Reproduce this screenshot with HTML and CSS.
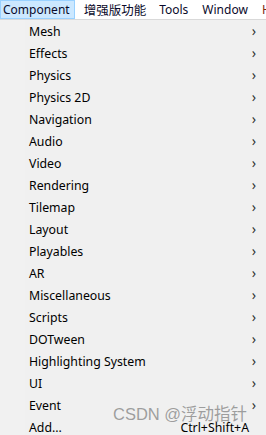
FILE: index.html
```html
<!DOCTYPE html>
<html>
<head>
<meta charset="utf-8">
<link rel="stylesheet" href="styles.css">
</head>
<body>
<div class="menubar">
  <span class="top active">Component</span>
  <span class="top cjk">增强版功能</span>
  <span class="top">Tools</span>
  <span class="top">Window</span>
  <span class="top help">Help</span>
</div>
<div class="menu">
  <div class="item"><span>Mesh</span><span class="chev">›</span></div>
  <div class="item"><span>Effects</span><span class="chev">›</span></div>
  <div class="item"><span>Physics</span><span class="chev">›</span></div>
  <div class="item"><span>Physics 2D</span><span class="chev">›</span></div>
  <div class="item"><span>Navigation</span><span class="chev">›</span></div>
  <div class="item"><span>Audio</span><span class="chev">›</span></div>
  <div class="item"><span>Video</span><span class="chev">›</span></div>
  <div class="item"><span>Rendering</span><span class="chev">›</span></div>
  <div class="item"><span>Tilemap</span><span class="chev">›</span></div>
  <div class="item"><span>Layout</span><span class="chev">›</span></div>
  <div class="item"><span>Playables</span><span class="chev">›</span></div>
  <div class="item"><span>AR</span><span class="chev">›</span></div>
  <div class="item"><span>Miscellaneous</span><span class="chev">›</span></div>
  <div class="item"><span>Scripts</span><span class="chev">›</span></div>
  <div class="item"><span>DOTween</span><span class="chev">›</span></div>
  <div class="item"><span>Highlighting System</span><span class="chev">›</span></div>
  <div class="item"><span>UI</span><span class="chev">›</span></div>
  <div class="item"><span>Event</span><span class="chev">›</span></div>
  <div class="item"><span>Add...</span><span class="shortcut">Ctrl+Shift+A</span></div>
  <div class="watermark">CSDN @浮动指针</div>
</div>
</body>
</html>
```
FILE: styles.css
```css
html, body {
  margin: 0;
  padding: 0;
  width: 266px;
  height: 435px;
  overflow: hidden;
  background: #f0f0f0;
  font-family: "Noto Sans", "Noto Sans CJK SC", sans-serif;
  font-size: 12px;
  color: #000;
}
.menubar {
  display: flex;
  height: 19px;
  background: #ffffff;
  border-bottom: 1px solid #d9d9d9;
  white-space: nowrap;
  overflow: hidden;
}
.top {
  display: flex;
  align-items: center;
  padding: 0 7px;
  height: 19px;
  box-sizing: border-box;
  font-size: 12px;
  color: #0a0a2a;
}
.top.cjk {
  font-size: 12.5px;
  padding: 0 6px 0 8px;
}
.top.active {
  background: #cce8ff;
  border: 1px solid #99d1ff;
  padding: 0 4px 0 2px;
  margin-right: 1px;
}
.top.help {
  color: #7a2a10;
}
.menu {
  position: relative;
  background: #f0f0f0;
  background-image: linear-gradient(to right, #f1f1f1 0, #f1f1f1 25px, #f0f0f0 25px);
}
.item {
  height: 22px;
  display: flex;
  align-items: center;
  justify-content: space-between;
  padding: 0 10px 0 29px;
  font-size: 12.3px;
}
.chev {
  font-size: 14px;
  color: #333;
  line-height: 1;
}
.shortcut {
  margin-right: 7px;
}
.watermark {
  position: absolute;
  left: 113px;
  top: 381px;
  font-family: "Liberation Sans", "Noto Sans CJK SC", sans-serif;
  font-size: 16.5px;
  color: rgba(130,130,130,0.75);
}
```
